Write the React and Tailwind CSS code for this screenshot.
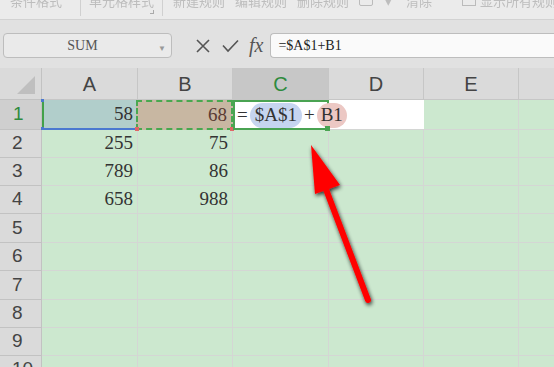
import React from 'react';

const cols = [
  { id: 'A', w: 96 },
  { id: 'B', w: 95 },
  { id: 'C', w: 96 },
  { id: 'D', w: 95 },
  { id: 'E', w: 95 },
  { id: '', w: 40 },
];

const rowHeights = [30, 28, 28, 28, 29, 28, 29, 28, 28, 28];

const data = {
  2: ['255', '75'],
  3: ['789', '86'],
  4: ['658', '988'],
};

const serif = { fontFamily: '"Liberation Serif", "DejaVu Serif", serif' };
const sans = { fontFamily: '"Liberation Sans", Arial, sans-serif' };

const Toolbar = () => (
  <div className="h-[20px] bg-[#ebebeb] border-b border-[#d2d2d2] relative overflow-hidden flex items-start whitespace-nowrap text-[13px] text-[#bdbdbd] blur-[0.6px]" style={{ fontFamily: '"Noto Sans CJK SC", sans-serif' }}>
    <div className="w-[80px] shrink-0 pl-[10px] -mt-[9px]">条件格式</div>
    <div className="w-px shrink-0 h-[16px] bg-[#d0d0d0]" />
    <div className="w-[81px] shrink-0 pl-[8px] -mt-[9px] relative">
      单元格样式
      <span className="absolute right-[8px] top-[19px] w-[4px] h-[4px] border-r border-b border-[#aaa]" />
    </div>
    <div className="w-px shrink-0 h-[16px] bg-[#d0d0d0]" />
    <div className="flex shrink-0 gap-[10px] pl-[10px] -mt-[9px]">
      <span>新建规则</span>
      <span>编辑规则</span>
      <span>删除规则</span>
    </div>
    <div className="ml-[10px] shrink-0 mt-[-2px] w-[14px] h-[8px] border border-[#bbb] rounded-[2px]" />
    <div className="ml-[12px] shrink-0 -mt-[9px]">▾</div>
    <div className="ml-[14px] shrink-0 -mt-[9px]">清除</div>
    <div className="ml-[30px] shrink-0 mt-[-2px] w-[14px] h-[8px] border border-[#bbb]" />
    <div className="ml-[4px] shrink-0 -mt-[9px]">显示所有规则</div>
  </div>
);

const FormulaBar = () => (
  <div className="h-[48px] bg-[#e1e1e1] flex items-start pt-[13px]">
    <div className="ml-[3px] w-[169px] h-[25px] rounded-[4px] border border-[#bdbdbd] bg-[#eaeaea] relative flex items-center justify-center">
      <span className="text-[14px] text-[#555] -ml-[10px]" style={serif}>SUM</span>
      <span className="absolute right-[5px] top-[8px] text-[8px] text-[#999]">▼</span>
    </div>
    <svg width="16" height="16" viewBox="0 0 16 16" className="ml-[23px] mt-[5px]">
      <path d="M2 2 L14 14 M14 2 L2 14" stroke="#555" strokeWidth="1.6" fill="none" />
    </svg>
    <svg width="17" height="14" viewBox="0 0 17 14" className="ml-[11px] mt-[6px]">
      <path d="M1 6.5 L6 12 L16 1.5" stroke="#555" strokeWidth="1.6" fill="none" />
    </svg>
    <span className="ml-[10px] mt-[1px] text-[20px] italic text-[#555] leading-[22px]" style={serif}>fx</span>
    <div className="ml-[7px] flex-1 h-[25px] rounded-l-[4px] border border-r-0 border-[#bdbdbd] bg-[#fafafa] flex items-center pl-[7px]">
      <span className="text-[14px] text-[#222]" style={serif}>=$A$1+B1</span>
    </div>
  </div>
);

const HeaderRow = () => (
  <div className="flex h-[32px] bg-[#dadada]">
    <div className="w-[42px] shrink-0 border-r border-b border-[#c2c2c2] relative">
      <div className="absolute right-[6px] bottom-[5px] w-0 h-0 border-l-[18px] border-l-transparent border-b-[18px] border-b-[#bfbfbf]" />
    </div>
    {cols.map((c) => (
      <div
        key={c.id || 'f'}
        style={{ width: c.w, ...sans }}
        className={`shrink-0 border-r border-b border-[#c6c6c6] flex items-center justify-center text-[20px] ${c.id === 'C' ? 'bg-[#c7c7c7] text-[#2e8b3e]' : 'text-[#444]'}`}
      >
        {c.id}
      </div>
    ))}
  </div>
);

const Row1 = () => (
  <div className="flex h-[30px]">
    <div className="w-[42px] shrink-0 bg-[#cfcfcf] border-r border-b border-[#c2c2c2] pl-[13px] flex items-center text-[19px] text-[#2e8b3e]" style={sans}>1</div>
    <div className="w-[94px] shrink-0 bg-[#b1cecb] border-l-2 border-l-[#42a14a] border-b-2 border-b-[#4a78d0] relative flex items-center justify-end pr-[3px] text-[19px] text-[#333]" style={serif}>
      58
      <span className="absolute -left-[3px] -top-px w-[3px] h-[3px] bg-[#4a78d0]" />
      <span className="absolute -left-[3px] -bottom-[2px] w-[3px] h-[3px] bg-[#4a78d0]" />
    </div>
    <div className="w-[97px] shrink-0 bg-[#c8b7a2] border-2 border-dashed border-[#49a84f] relative flex items-center justify-end pr-[4px] text-[19px] text-[#5a3b34]" style={serif}>
      68
      <span className="absolute -left-[3px] -bottom-[3px] w-[4px] h-[4px] bg-[#e06666]" />
      <span className="absolute -right-[3px] -bottom-[3px] w-[4px] h-[4px] bg-[#e06666]" />
    </div>
    <div className="w-[96px] shrink-0 bg-white border-2 border-[#4aa352] relative flex items-center pl-[2px] text-[19px] text-[#333] whitespace-nowrap" style={serif}>
      <span className="mr-[2px]">=</span>
      <span className="bg-[#c6d5f0] rounded-full px-[5px] h-[25px] flex items-center">$A$1</span>
      <span className="mx-[2px]">+</span>
      <span className="bg-[#ecc8c4] rounded-full px-[4px] h-[25px] flex items-center">B1</span>
      <span className="w-[2px] h-[24px] bg-[#333] ml-[1px]" />
      <span className="absolute -right-[3px] -bottom-[3px] w-[5px] h-[5px] bg-[#4aa352]" />
    </div>
    <div className="w-[95px] shrink-0 bg-white border-b border-[#d4d6d4]" />
    <div className="w-[95px] shrink-0 bg-[#cce8cf] border-r border-b border-[#d4d6d4]" />
    <div className="w-[40px] shrink-0 bg-[#cce8cf] border-b border-[#d4d6d4]" />
  </div>
);

const Row = ({ n, h }) => {
  const vals = data[n] || [];
  return (
    <div className="flex" style={{ height: h }}>
      <div className="w-[42px] shrink-0 bg-[#dadada] border-r border-b border-[#c2c2c2] pl-[12px] flex items-center text-[19px] text-[#444]" style={sans}>
        {n}
      </div>
      {cols.map((c, i) => (
        <div
          key={c.id || 'f'}
          style={{ width: c.w, ...serif }}
          className="shrink-0 bg-[#cce8cf] border-r border-b border-[#d4d6d4] flex items-center justify-end pr-[4px] text-[19px] text-[#333]"
        >
          {vals[i]}
        </div>
      ))}
    </div>
  );
};

const Arrow = () => (
  <svg className="absolute left-0 top-0 pointer-events-none" width="554" height="367">
    <defs>
      <filter id="shadow" x="-50%" y="-50%" width="200%" height="200%">
        <feGaussianBlur in="SourceAlpha" stdDeviation="2" />
        <feOffset dx="1" dy="2" result="b" />
        <feComponentTransfer>
          <feFuncA type="linear" slope="0.8" />
        </feComponentTransfer>
        <feMerge>
          <feMergeNode />
          <feMergeNode in="SourceGraphic" />
        </feMerge>
      </filter>
    </defs>
    <g filter="url(#shadow)">
      <line x1="368" y1="300" x2="324" y2="184" stroke="#ff0000" strokeWidth="6" strokeLinecap="round" />
      <polygon points="311,145 315,194 340,185" fill="#ff0000" />
    </g>
  </svg>
);

export default function App() {
  return (
    <div className="w-[554px] h-[367px] overflow-hidden relative bg-[#cce8cf]">
      <Toolbar />
      <FormulaBar />
      <HeaderRow />
      <Row1 />
      {rowHeights.slice(1).map((h, i) => (
        <Row key={i + 2} n={i + 2} h={h} />
      ))}
      <Arrow />
    </div>
  );
}
